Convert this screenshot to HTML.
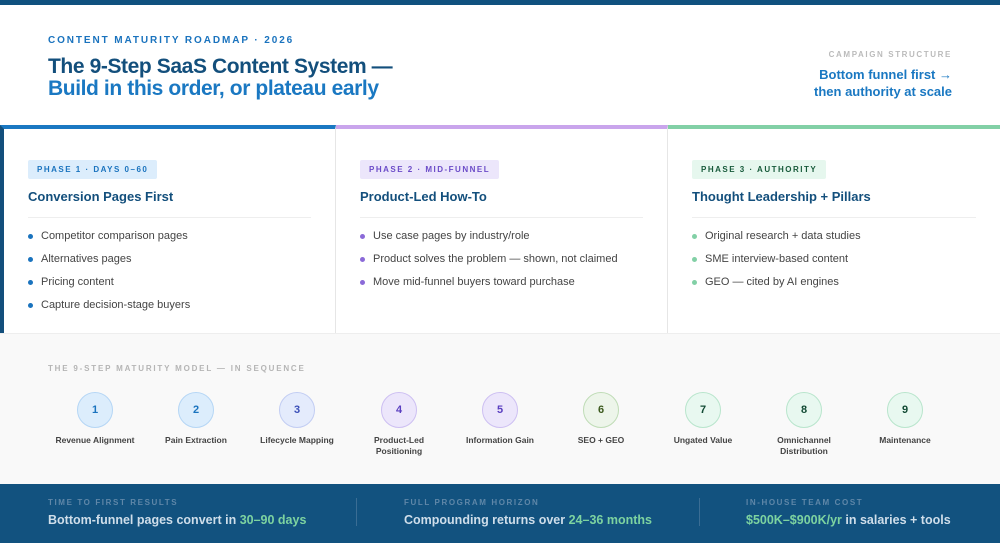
<!DOCTYPE html>
<html><head><meta charset="utf-8"><style>
*{margin:0;padding:0;box-sizing:border-box}
body{width:1000px;height:543px;overflow:hidden;background:#fff;font-family:"Liberation Sans",sans-serif;position:relative}
.abs{position:absolute}
.top{left:0;top:0;width:1000px;height:5px;background:#10517f}
.kick{left:48px;top:35px;font-size:10px;font-weight:bold;letter-spacing:1.9px;color:#1a73be}
.h1{left:48px;top:56px;font-size:21px;font-weight:bold;line-height:22px;letter-spacing:-0.4px;color:#134f7c}
.h1 span{color:#1a78c2}
.cs{right:48px;top:50px;font-size:8px;font-weight:bold;letter-spacing:1.6px;color:#bbb;text-align:right}
.bf{right:48px;top:66px;font-size:13px;font-weight:bold;line-height:17px;color:#1a78c2;text-align:right}
.card{top:125px;height:208px;border-top:4px solid}
.tag{position:absolute;left:28px;top:31px;height:19px;padding:0 9px;font-size:8px;font-weight:bold;letter-spacing:1.5px;line-height:19px;border-radius:2px}
.ct{position:absolute;left:28px;top:60px;font-size:13px;font-weight:bold;color:#134f7c}
.hr{position:absolute;left:28px;right:24px;top:88px;height:1px;background:#eee}
ul{position:absolute;left:28px;top:100px;list-style:none}
li{font-size:11px;color:#444;height:23px;line-height:14px;position:relative;padding-left:13px}
li:before{content:"";position:absolute;left:0;top:5px;width:5px;height:5px;border-radius:50%;background:var(--b)}
.steps{left:0;top:333px;width:1000px;height:151px;background:#f9f9f9;border-top:1px solid #eee}
.sk{left:48px;top:364px;font-size:8px;font-weight:bold;letter-spacing:1.8px;color:#b5b5b5}
.st{top:392px;width:100px;text-align:center}
.c{width:36px;height:36px;border-radius:50%;margin:0 auto;border:1px solid;font-size:11px;font-weight:bold;line-height:34px}
.lb{font-size:8.5px;font-weight:bold;color:#444;margin-top:7px;line-height:11px}
.foot{left:0;top:484px;width:1000px;height:59px;background:#12527f}
.fk{top:498px;font-size:8px;font-weight:bold;letter-spacing:1.6px;color:#5f87a8}
.fv{top:513px;font-size:12.5px;font-weight:bold;color:#cfdeea}
.fv span{color:#7dd3a0}
.div{top:498px;width:1px;height:28px;background:#3a6d94}
</style></head><body>
<div class="abs top"></div>
<div class="abs kick">CONTENT MATURITY ROADMAP · 2026</div>
<div class="abs h1">The 9-Step SaaS Content System —<br><span>Build in this order, or plateau early</span></div>
<div class="abs cs">CAMPAIGN STRUCTURE</div>
<div class="abs bf">Bottom funnel first →<br>then authority at scale</div>

<div class="abs card" style="left:0;width:336px;border-color:#1a78c2;border-left:4px solid #134f7c;border-right:1px solid #e6e6e6;--b:#1a73be">
<div class="tag" style="left:24px;background:#dcedfc;color:#1a73be">PHASE 1 · DAYS 0–60</div>
<div class="ct" style="left:24px">Conversion Pages First</div><div class="hr" style="left:24px"></div>
<ul style="left:24px"><li>Competitor comparison pages</li><li>Alternatives pages</li><li>Pricing content</li><li>Capture decision-stage buyers</li></ul></div>

<div class="abs card" style="left:336px;width:332px;border-color:#c9a5ec;border-right:1px solid #e6e6e6;--b:#8b6ad8">
<div class="tag" style="left:24px;background:#ece6fb;color:#6b4bc8">PHASE 2 · MID-FUNNEL</div>
<div class="ct" style="left:24px">Product-Led How-To</div><div class="hr" style="left:24px"></div>
<ul style="left:24px"><li>Use case pages by industry/role</li><li>Product solves the problem — shown, not claimed</li><li>Move mid-funnel buyers toward purchase</li></ul></div>

<div class="abs card" style="left:668px;width:332px;border-color:#82d0a6;--b:#82d0a6">
<div class="tag" style="left:24px;background:#e6f7ee;color:#175a3a">PHASE 3 · AUTHORITY</div>
<div class="ct" style="left:24px">Thought Leadership + Pillars</div><div class="hr" style="left:24px"></div>
<ul style="left:24px"><li>Original research + data studies</li><li>SME interview-based content</li><li>GEO — cited by AI engines</li></ul></div>

<div class="abs steps"></div>
<div class="abs sk">THE 9-STEP MATURITY MODEL — IN SEQUENCE</div>
<div class="abs st" style="left:45px"><div class="c" style="background:#dcedfc;border-color:#b5d6f5;color:#1a73be">1</div><div class="lb">Revenue Alignment</div></div>
<div class="abs st" style="left:146px"><div class="c" style="background:#dcedfc;border-color:#b5d6f5;color:#1a73be">2</div><div class="lb">Pain Extraction</div></div>
<div class="abs st" style="left:247px"><div class="c" style="background:#e4ebfc;border-color:#c2cdf3;color:#3b4fb8">3</div><div class="lb">Lifecycle Mapping</div></div>
<div class="abs st" style="left:349px"><div class="c" style="background:#ece6fb;border-color:#cdbff2;color:#5a3fc0">4</div><div class="lb">Product-Led<br>Positioning</div></div>
<div class="abs st" style="left:450px"><div class="c" style="background:#ece6fb;border-color:#cdbff2;color:#5a3fc0">5</div><div class="lb">Information Gain</div></div>
<div class="abs st" style="left:551px"><div class="c" style="background:#edf5ea;border-color:#bfdcb6;color:#3c5a1e">6</div><div class="lb">SEO + GEO</div></div>
<div class="abs st" style="left:653px"><div class="c" style="background:#e8f8f0;border-color:#b8e5cc;color:#124a34">7</div><div class="lb">Ungated Value</div></div>
<div class="abs st" style="left:754px"><div class="c" style="background:#e8f8f0;border-color:#b8e5cc;color:#124a34">8</div><div class="lb">Omnichannel<br>Distribution</div></div>
<div class="abs st" style="left:855px"><div class="c" style="background:#e8f8f0;border-color:#b8e5cc;color:#124a34">9</div><div class="lb">Maintenance</div></div>

<div class="abs foot"></div>
<div class="abs fk" style="left:48px">TIME TO FIRST RESULTS</div>
<div class="abs fv" style="left:48px">Bottom-funnel pages convert in <span>30–90 days</span></div>
<div class="abs div" style="left:356px"></div>
<div class="abs fk" style="left:404px">FULL PROGRAM HORIZON</div>
<div class="abs fv" style="left:404px">Compounding returns over <span>24–36 months</span></div>
<div class="abs div" style="left:699px"></div>
<div class="abs fk" style="left:746px">IN-HOUSE TEAM COST</div>
<div class="abs fv" style="left:746px"><span>$500K–$900K/yr</span> in salaries + tools</div>
</body></html>
